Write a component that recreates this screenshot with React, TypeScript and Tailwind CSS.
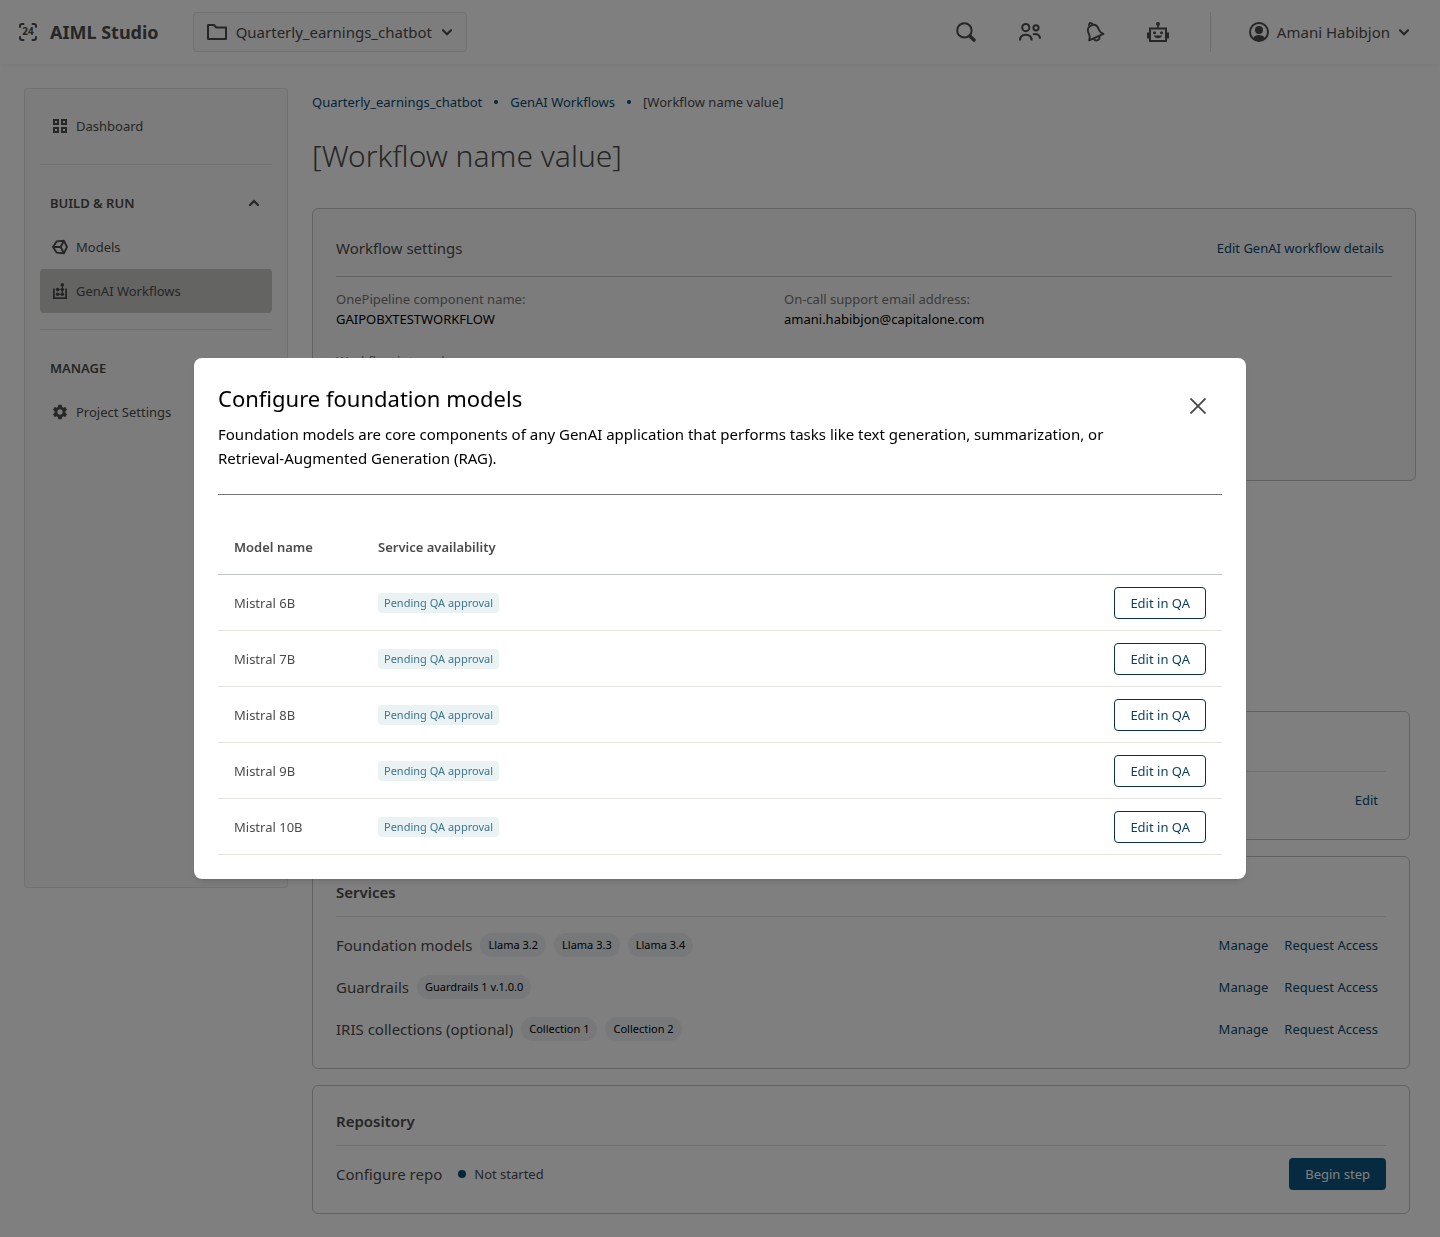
import { useState, type ReactNode } from "react";
import { MdSettings } from "react-icons/md";

const models = ["Mistral 6B", "Mistral 7B", "Mistral 8B", "Mistral 9B", "Mistral 10B"];

const services = [
  { name: "Foundation models", tags: ["Llama 3.2", "Llama 3.3", "Llama 3.4"] },
  { name: "Guardrails", tags: ["Guardrails 1 v.1.0.0"] },
  { name: "IRIS collections (optional)", tags: ["Collection 1", "Collection 2"] },
];

function Chevron({ up = false }: { up?: boolean }) {
  return (
    <svg width="12" height="12" viewBox="0 0 12 12" fill="none" stroke="currentColor" strokeWidth="2.2" strokeLinecap="round">
      <path d={up ? "M2 8l4-4 4 4" : "M2 4.2l4 4 4-4"} />
    </svg>
  );
}

function LogoIcon() {
  return (
    <svg width="20" height="20" viewBox="0 0 20 20" fill="none" stroke="currentColor" strokeWidth="2" strokeLinecap="round">
      <path d="M2 5V4a2 2 0 0 1 2-2h1.500M14.500 2H16a2 2 0 0 1 2 2v1M18 15v1a2 2 0 0 1-2 2h-1.500M5.500 18H4a2 2 0 0 1-2-2v-1" />
      <text x="10" y="13" textAnchor="middle" fontSize="10" fontWeight="700" fill="currentColor" stroke="none">24</text>
    </svg>
  );
}

function FolderIcon() {
  return (
    <svg width="20" height="16" viewBox="0 0 20 16" fill="none" stroke="currentColor" strokeWidth="2" strokeLinejoin="round">
      <path d="M1 1h6l2 2.400h10V15H1z" />
    </svg>
  );
}

function SearchIcon() {
  return (
    <svg width="20" height="20" viewBox="0 0 20 20" fill="none" stroke="currentColor">
      <circle cx="8.400" cy="8.400" r="7.200" strokeWidth="2" />
      <path d="M13.800 14l4.200 4" strokeWidth="3.600" strokeLinecap="round" />
    </svg>
  );
}

function PeopleIcon() {
  return (
    <svg width="22" height="18" viewBox="0 0 22 18" fill="none" stroke="currentColor" strokeWidth="2">
      <circle cx="6.800" cy="4.600" r="3.600" />
      <circle cx="17" cy="4.800" r="2.600" />
      <path d="M1 17.600C1 13.600 3.400 11.800 6.800 11.800s5.800 1.800 5.800 5.800" />
      <path d="M13.800 11.400c4-1.200 7.200.4 7.200 4.400" />
    </svg>
  );
}

function BellIcon() {
  return (
    <svg width="22" height="22" viewBox="0 0 22 22" fill="none" stroke="currentColor" strokeWidth="1.900" strokeLinejoin="round">
      <g transform="rotate(-24 11 11)">
        <path d="M9.400 3.600a1.700 1.700 0 1 1 3.200 0" />
        <path d="M3.200 16.600c1.400-1.400 2.400-2.800 2.400-5.200V9.200C5.600 5.800 7.800 3.900 11 3.900s5.400 1.900 5.400 5.300v2.200c0 2.400 1 3.800 2.400 5.200z" />
        <path d="M8 17a3 3 0 0 0 6 0" />
      </g>
    </svg>
  );
}

function RobotIcon() {
  return (
    <svg width="22" height="20" viewBox="0 0 22 20" fill="currentColor">
      <path fillRule="evenodd" d="M2 5.500h18V20H2zM4 7.500v10.500h14V7.500z" />
      <path d="M0 10.500h2.500v6H0zM19.500 10.500H22v6h-2.500zM10.200 3h1.600v3h-1.600z" />
      <circle cx="11" cy="2" r="2" />
      <circle cx="7.500" cy="10.800" r="1.500" />
      <circle cx="14.500" cy="10.800" r="1.500" />
      <path d="M7 13.500h8c-.4 2-2 2.700-4 2.700s-3.600-.7-4-2.700z" />
    </svg>
  );
}

function AccountIcon() {
  return (
    <svg width="20" height="20" viewBox="0 0 20 20" fill="none">
      <circle cx="10" cy="10" r="9" stroke="currentColor" strokeWidth="2" />
      <circle cx="10" cy="8" r="4" fill="currentColor" />
      <path d="M3.800 16.500c1.500-2.600 3.600-3.500 6.200-3.500s4.700.9 6.200 3.500c-3.400 3-9 3-12.400 0z" fill="currentColor" />
    </svg>
  );
}

function GridIcon() {
  return (
    <svg width="16" height="16" viewBox="0 0 16 16" fill="none" stroke="currentColor" strokeWidth="2">
      <path d="M2 2h4v4H2zM10 2h4v4h-4zM2 10h4v4H2zM10 10h4v4h-4z" />
    </svg>
  );
}

function ModelsIcon() {
  return (
    <svg width="16" height="16" viewBox="0 0 16 16" fill="none" stroke="currentColor" strokeWidth="1.900" strokeLinejoin="round">
      <path d="M1 8l3.600-5.600L12 1.800 15 8l-3 6.200-7.400-.6z" />
      <path d="M1 8h7.600M12 1.800L8.600 8l3.400 6.200" />
    </svg>
  );
}

function WorkflowIcon() {
  return (
    <svg width="16" height="16" viewBox="0 0 16 16" fill="currentColor">
      <path d="M1 5.500h1.800v8.700h10.400V5.500H15V16H1z" />
      <circle cx="10.300" cy="1.900" r="1.800" />
      <circle cx="5.600" cy="6.600" r="1.800" />
      <circle cx="10.300" cy="6.600" r="1.800" />
      <circle cx="5.600" cy="11.200" r="1.800" />
      <circle cx="10.300" cy="11.200" r="1.800" />
      <path d="M9.800 2h1v9h-1zM5 6.200h5v.9H5zM5 10.700h5v.9H5z" />
    </svg>
  );
}

function Header() {
  return (
    <header className="flex h-16 items-center justify-between bg-white pr-[30px] pl-[18px] shadow-[0_2px_4px_rgba(0,0,0,0.05)]">
      <div className="flex items-center gap-[34px]">
        <a href="#" className="flex items-center gap-3 text-[18px] font-bold">
          <LogoIcon />
          AIML Studio
        </a>
        <button className="flex h-10 items-center gap-[9px] rounded-sm border border-[#e0e0e0] bg-[#fbfbfb] px-[13px] text-[15px]">
          <FolderIcon />
          Quarterly_earnings_chatbot
          <Chevron />
        </button>
      </div>
      <div className="flex items-center">
        <div className="flex items-center">
          <button aria-label="Search" className="flex w-16 justify-center"><SearchIcon /></button>
          <button aria-label="People" className="flex w-16 justify-center"><PeopleIcon /></button>
          <button aria-label="Notifications" className="flex w-16 justify-center"><BellIcon /></button>
          <button aria-label="Assistant" className="flex w-16 justify-center"><RobotIcon /></button>
        </div>
        <button className="ml-5 flex h-10 items-center gap-2 border-l border-[#dcdcdc] pl-[38px] text-[15px]">
          <AccountIcon />
          Amani Habibjon
          <Chevron />
        </button>
      </div>
    </header>
  );
}

function NavItem({ icon, label, active = false }: { icon: ReactNode; label: string; active?: boolean }) {
  return (
    <a href="#" className={`flex h-11 items-center gap-2 rounded-sm px-3 text-[13px] leading-5 ${active ? "bg-[#c8c8c5]" : ""}`}>
      {icon}
      {label}
    </a>
  );
}

function Sidebar() {
  return (
    <nav className="min-h-[800px] w-66 shrink-0 rounded-sm border border-[#e2e2e2] bg-[#f8f8f8] p-[15px]">
      <NavItem icon={<GridIcon />} label="Dashboard" />
      <hr className="my-4 border-[#e0e0e0]" />
      <button className="flex h-11 w-full items-center justify-between pr-3 pl-[10px] text-[13px] leading-5 font-semibold">
        BUILD &amp; RUN
        <Chevron up />
      </button>
      <NavItem icon={<ModelsIcon />} label="Models" />
      <NavItem icon={<WorkflowIcon />} label="GenAI Workflows" active />
      <hr className="my-4 border-[#e0e0e0]" />
      <h2 className="flex h-11 items-center pl-[10px] text-[13px] leading-5 font-semibold">MANAGE</h2>
      <NavItem icon={<MdSettings size={18} className="-mx-px" />} label="Project Settings" />
    </nav>
  );
}

function ActionLink({ children }: { children: ReactNode }) {
  return <a href="#" className="text-[13px] leading-5 text-[#0a4a70]">{children}</a>;
}

function Field({ label, value }: { label: string; value?: string }) {
  return (
    <div className="h-[62px] text-[13px] leading-5">
      <dt className="text-[#767676]">{label}</dt>
      <dd className="text-black">{value}</dd>
    </div>
  );
}

function SettingsCard() {
  return (
    <section className="mt-8 min-h-[273px] rounded-md border border-[#c4c4c4] bg-[#f8f8f8] px-[23px] pt-[27px]">
      <div className="flex items-center justify-between border-b border-[#c4c4c4] pr-2 pb-4">
        <h2 className="text-[15px] leading-6">Workflow settings</h2>
        <ActionLink>Edit GenAI workflow details</ActionLink>
      </div>
      <dl className="grid grid-cols-[448px_1fr] pt-3">
        <Field label="OnePipeline component name:" value="GAIPOBXTESTWORKFLOW" />
        <Field label="On-call support email address:" value="amani.habibjon@capitalone.com" />
        <Field label="Workflow internal:" />
      </dl>
    </section>
  );
}

function StepCard({ title, children }: { title?: string; children: ReactNode }) {
  return (
    <section className="mr-[6px] rounded-md border border-[#c4c4c4] px-[23px] pt-[23px] pb-[23px]">
      <h2 className="h-[37px] border-b border-[#dcdcdc] text-[15px] leading-6 font-semibold">{title}</h2>
      <div className="flex flex-col gap-[10px] pt-3">{children}</div>
    </section>
  );
}

function ConfigureModal({ onClose }: { onClose: () => void }) {
  return (
    <div className="fixed inset-0 flex items-center justify-center bg-black/50">
      <div
        role="dialog"
        aria-modal="true"
        aria-labelledby="modal-title"
        className="mx-6 w-full max-w-[1052px] rounded-lg bg-white p-6 shadow-md"
      >
        <div className="flex items-start justify-between border-b border-[#767676] pb-6 text-black">
          <div className="max-w-[920px]">
            <h2 id="modal-title" className="text-[22px] leading-8">Configure foundation models</h2>
            <p className="mt-2 text-[15px] leading-6">
              Foundation models are core components of any GenAI application that performs tasks like text generation, summarization, or Retrieval-Augmented Generation (RAG).
            </p>
          </div>
          <button aria-label="Close" onClick={onClose} className="flex size-12 shrink-0 items-center justify-center text-[#484848]">
            <svg width="16" height="16" viewBox="0 0 16 16" fill="none" stroke="currentColor" strokeWidth="1.800">
              <path d="M.5.5l15 15M15.500.5l-15 15" />
            </svg>
          </button>
        </div>
        <table className="mt-6 w-full text-left text-[13px] leading-5">
          <thead>
            <tr className="h-14 border-b border-[#c0c4c6]">
              <th className="w-40 pl-4 font-semibold">Model name</th>
              <th className="font-semibold">Service availability</th>
              <th />
            </tr>
          </thead>
          <tbody>
            {models.map((model) => (
              <tr key={model} className="h-14 border-b border-[#e4e4de]">
                <td className="pl-4">{model}</td>
                <td>
                  <span className="inline-block rounded-sm bg-[#eaf2f4] px-[6px] text-[11px] leading-5 text-[#3f7690]">
                    Pending QA approval
                  </span>
                </td>
                <td className="pr-4 text-right">
                  <button className="h-8 rounded-sm border border-[#0c3247] px-[15px] text-[#0c3f5e]">Edit in QA</button>
                </td>
              </tr>
            ))}
          </tbody>
        </table>
      </div>
    </div>
  );
}

export default function App() {
  const [open, setOpen] = useState(true);

  return (
    <div className="min-h-screen bg-white font-['Noto_Sans',sans-serif] text-[#4c4c4c]">
      <Header />
      <div className="flex items-start gap-6 p-6">
        <Sidebar />
        <main className="min-w-0 flex-1">
          {/* Breadcrumb */}
          <nav aria-label="Breadcrumb" className="flex h-7 items-center gap-3 text-[13px] leading-5">
            <ActionLink>Quarterly_earnings_chatbot</ActionLink>
            <span className="size-1 rounded-full bg-[#0a4a70]" />
            <ActionLink>GenAI Workflows</ActionLink>
            <span className="size-1 rounded-full bg-[#0a4a70]" />
            <span>[Workflow name value]</span>
          </nav>
          <h1 className="mt-5 text-[30px] leading-10 font-light">[Workflow name value]</h1>

          <SettingsCard />

          <div className="mt-[230px] flex flex-col gap-4">
            <StepCard>
              <div className="flex h-8 items-center justify-end pr-2">
                <ActionLink>Edit</ActionLink>
              </div>
            </StepCard>

            <StepCard title="Services">
              {services.map((service) => (
                <div key={service.name} className="flex h-8 items-center gap-2 pr-2">
                  <h3 className="text-[15px]">{service.name}</h3>
                  {service.tags.map((tag) => (
                    <span key={tag} className="rounded-full bg-[#eff1f3] px-2 text-[11px] leading-6 text-black">{tag}</span>
                  ))}
                  <div className="ml-auto flex gap-4">
                    <ActionLink>Manage</ActionLink>
                    <ActionLink>Request Access</ActionLink>
                  </div>
                </div>
              ))}
            </StepCard>

            <StepCard title="Repository">
              <div className="flex h-8 items-center">
                <h3 className="text-[15px]">Configure repo</h3>
                <span className="ml-4 size-2 rounded-full bg-[#0a4a70]" />
                <span className="ml-2 text-[13px] leading-5">Not started</span>
                <button className="ml-auto h-8 rounded-sm bg-[#0c5480] px-4 text-[13px] leading-5 text-white">Begin step</button>
              </div>
            </StepCard>
          </div>
        </main>
      </div>
      {open && <ConfigureModal onClose={() => setOpen(false)} />}
    </div>
  );
}
